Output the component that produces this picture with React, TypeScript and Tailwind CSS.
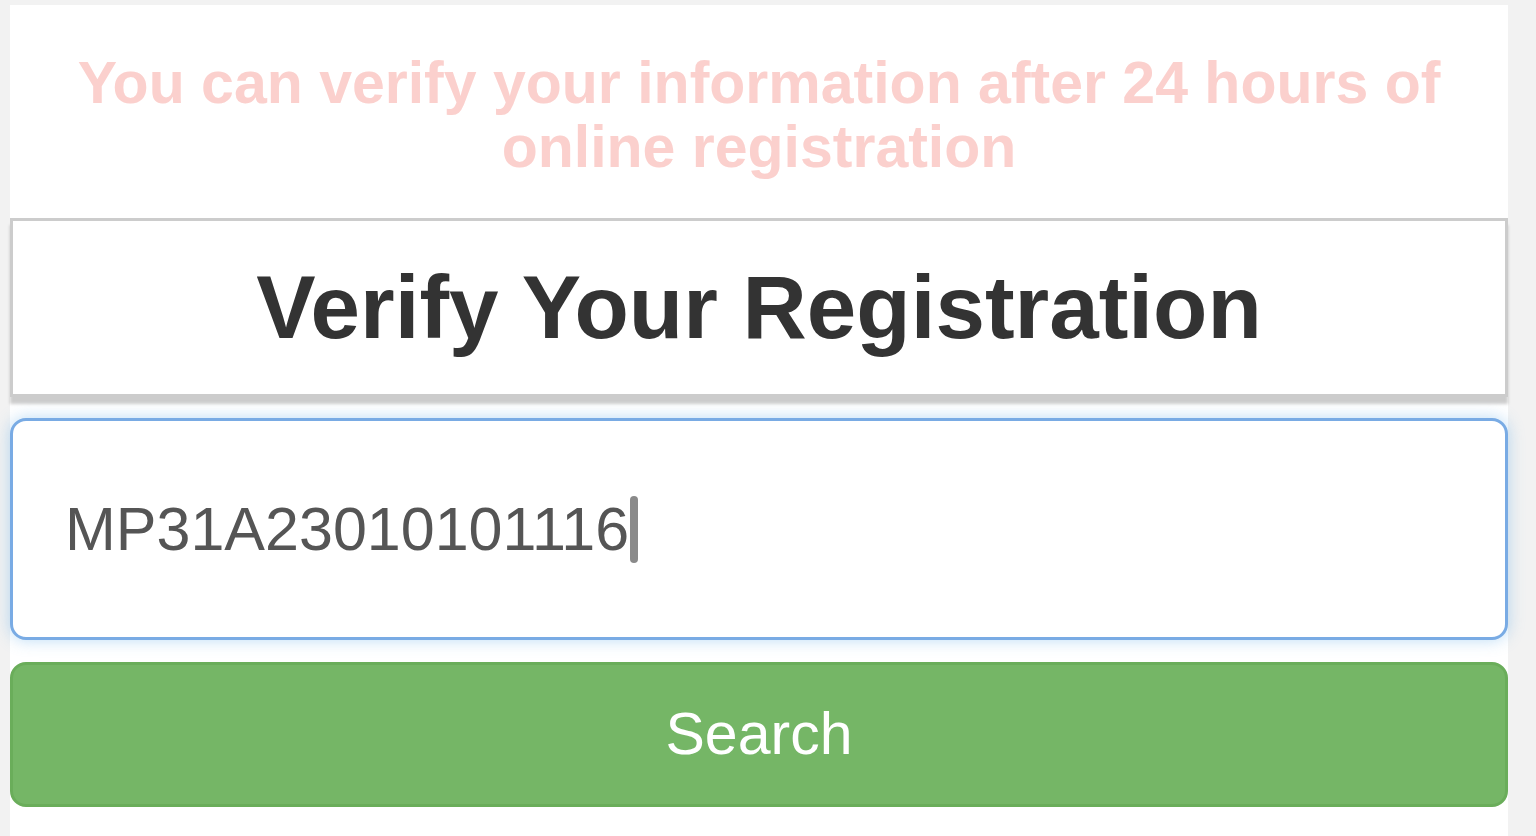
export default function App() {
  return (
    <div className="min-h-screen bg-[#f2f2f2] pt-[5px] pl-[10px] pr-[28px] font-['Liberation_Sans',Arial,sans-serif]">
      <div className="min-h-[831px] bg-white">
        <p className="pt-[46px] px-4 text-center text-[59px] leading-[64px] font-bold text-[#fbd0cd]">
          You can verify your information after 24 hours of online registration
        </p>

        <div className="mt-[39px] flex h-[179px] items-center justify-center border-[3px] border-[#cccccc] bg-white shadow-[0_7px_3px_rgba(0,0,0,0.2)]">
          <h1 className="text-[89px] leading-none font-bold text-[#333333]">Verify Your Registration</h1>
        </div>

        <div className="mt-[21px] flex h-[222px] items-center rounded-[16px] border-[3px] border-[#79abe4] bg-white pl-[52px] shadow-[0_0_16px_rgba(102,175,233,0.45)]">
          <span className="text-[61px] leading-none text-[#555555]">MP31A23010101116</span>
          <span className="ml-[1px] h-[67px] w-[8px] rounded-full bg-[#8a8a8a]" />
        </div>

        <button className="mt-[22px] flex h-[145px] w-full items-center justify-center rounded-[16px] border-[3px] border-[#6aad5a] bg-[#75b666] text-[59px] leading-none text-white">
          Search
        </button>
      </div>
    </div>
  );
}
